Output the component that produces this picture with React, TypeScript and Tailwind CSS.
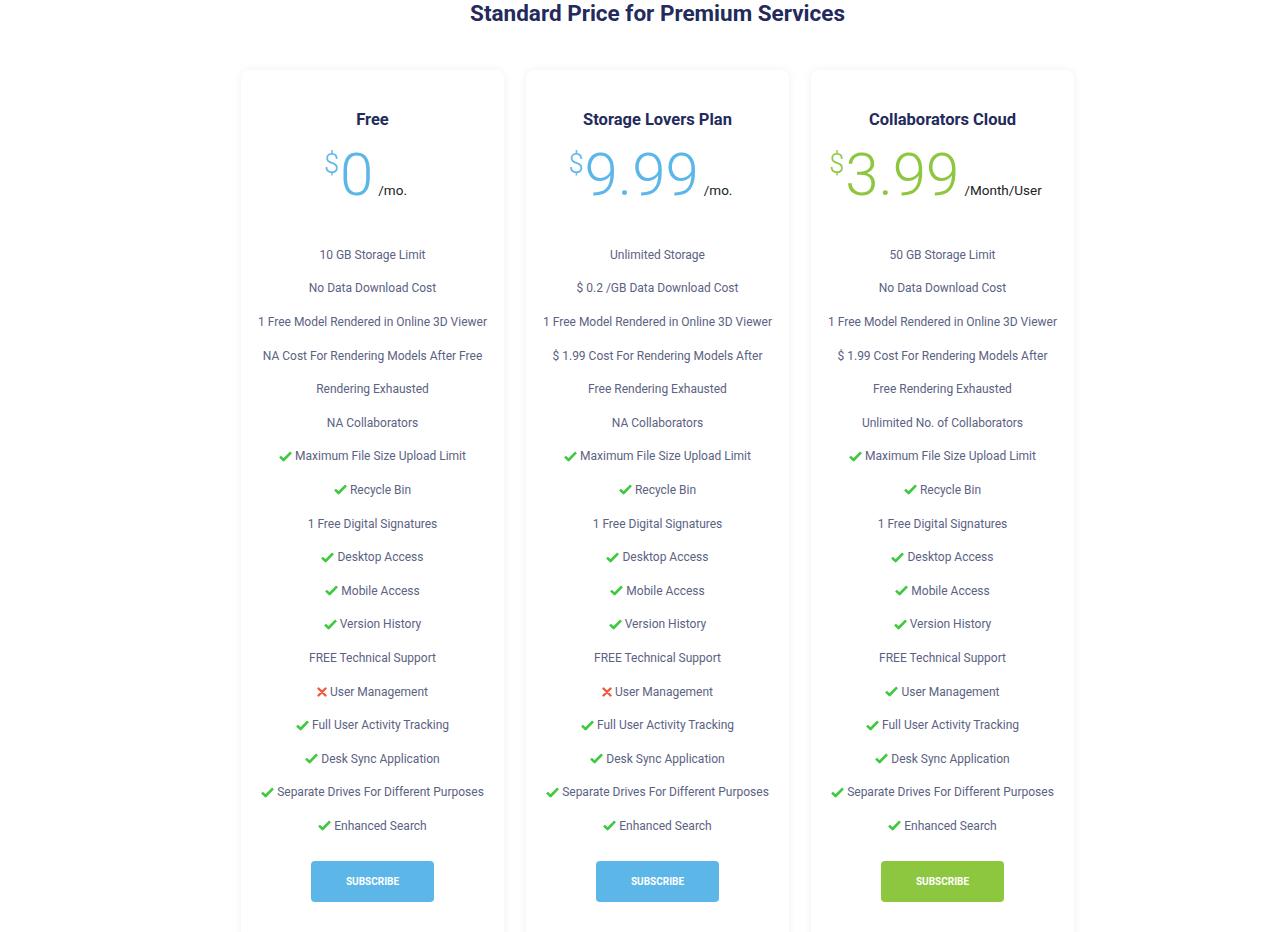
import React from 'react';

type Feature = { text: string; icon?: 'check' | 'cross' };

type Plan = {
  name: string;
  price: string;
  period: string;
  color: 'blue' | 'green';
  features: Feature[];
};

const PLANS: Plan[] = [
  {
    name: 'Free',
    price: '0',
    period: '/mo.',
    color: 'blue',
    features: [
      { text: '10 GB Storage Limit' },
      { text: 'No Data Download Cost' },
      { text: '1 Free Model Rendered in Online 3D Viewer' },
      { text: 'NA Cost For Rendering Models After Free' },
      { text: 'Rendering Exhausted' },
      { text: 'NA Collaborators' },
      { text: 'Maximum File Size Upload Limit', icon: 'check' },
      { text: 'Recycle Bin', icon: 'check' },
      { text: '1 Free Digital Signatures' },
      { text: 'Desktop Access', icon: 'check' },
      { text: 'Mobile Access', icon: 'check' },
      { text: 'Version History', icon: 'check' },
      { text: 'FREE Technical Support' },
      { text: 'User Management', icon: 'cross' },
      { text: 'Full User Activity Tracking', icon: 'check' },
      { text: 'Desk Sync Application', icon: 'check' },
      { text: 'Separate Drives For Different Purposes', icon: 'check' },
      { text: 'Enhanced Search', icon: 'check' },
    ],
  },
  {
    name: 'Storage Lovers Plan',
    price: '9.99',
    period: '/mo.',
    color: 'blue',
    features: [
      { text: 'Unlimited Storage' },
      { text: '$ 0.2 /GB Data Download Cost' },
      { text: '1 Free Model Rendered in Online 3D Viewer' },
      { text: '$ 1.99 Cost For Rendering Models After' },
      { text: 'Free Rendering Exhausted' },
      { text: 'NA Collaborators' },
      { text: 'Maximum File Size Upload Limit', icon: 'check' },
      { text: 'Recycle Bin', icon: 'check' },
      { text: '1 Free Digital Signatures' },
      { text: 'Desktop Access', icon: 'check' },
      { text: 'Mobile Access', icon: 'check' },
      { text: 'Version History', icon: 'check' },
      { text: 'FREE Technical Support' },
      { text: 'User Management', icon: 'cross' },
      { text: 'Full User Activity Tracking', icon: 'check' },
      { text: 'Desk Sync Application', icon: 'check' },
      { text: 'Separate Drives For Different Purposes', icon: 'check' },
      { text: 'Enhanced Search', icon: 'check' },
    ],
  },
  {
    name: 'Collaborators Cloud',
    price: '3.99',
    period: '/Month/User',
    color: 'green',
    features: [
      { text: '50 GB Storage Limit' },
      { text: 'No Data Download Cost' },
      { text: '1 Free Model Rendered in Online 3D Viewer' },
      { text: '$ 1.99 Cost For Rendering Models After' },
      { text: 'Free Rendering Exhausted' },
      { text: 'Unlimited No. of Collaborators' },
      { text: 'Maximum File Size Upload Limit', icon: 'check' },
      { text: 'Recycle Bin', icon: 'check' },
      { text: '1 Free Digital Signatures' },
      { text: 'Desktop Access', icon: 'check' },
      { text: 'Mobile Access', icon: 'check' },
      { text: 'Version History', icon: 'check' },
      { text: 'FREE Technical Support' },
      { text: 'User Management', icon: 'check' },
      { text: 'Full User Activity Tracking', icon: 'check' },
      { text: 'Desk Sync Application', icon: 'check' },
      { text: 'Separate Drives For Different Purposes', icon: 'check' },
      { text: 'Enhanced Search', icon: 'check' },
    ],
  },
];

const Check = () => (
  <svg width="13" height="11" viewBox="0 0 13 11" className="mr-[3px] shrink-0">
    <path d="M1 5.6 L4.6 9 L12 1.4" fill="none" stroke="#3ec93e" strokeWidth="2.6" strokeLinejoin="round" />
  </svg>
);

const Cross = () => (
  <svg width="10" height="10" viewBox="0 0 10 10" className="mr-[3px] shrink-0">
    <path d="M1.5 1.5 L8.5 8.5 M8.5 1.5 L1.5 8.5" stroke="#f05a3c" strokeWidth="2.4" strokeLinecap="round" />
  </svg>
);

const PlanCard: React.FC<{ plan: Plan }> = ({ plan }) => {
  const priceColor = plan.color === 'green' ? 'text-[#8dc63f]' : 'text-[#5db6e8]';
  const btnColor = plan.color === 'green' ? 'bg-[#8dc63f]' : 'bg-[#5db6e8]';
  return (
    <div className="w-[263px] bg-white rounded-lg shadow-[0_0_10px_rgba(0,0,0,0.06)] pt-[39px] pb-10 flex flex-col items-center">
      <h3 className="text-[16.5px] font-bold text-[#232a5c] leading-[22px]">{plan.name}</h3>
      <div className={`flex items-end mt-[9px] mr-[14px] ${priceColor}`}>
        <span className="text-[27px] font-light leading-none self-start mt-[11px]">$</span>
        <span className="text-[60px] font-light leading-[70px] ml-[1px]">{plan.price}</span>
        <span className="text-[13.5px] text-[#222] ml-[5px] mb-[10px]">{plan.period}</span>
      </div>
      <ul className="mt-[28px] flex flex-col items-center">
        {plan.features.map((f, i) => (
          <li key={i} className="h-[33.6px] flex items-center text-[12px] text-[#5b6282] whitespace-nowrap">
            {f.icon === 'check' && <Check />}
            {f.icon === 'cross' && <Cross />}
            {f.text}
          </li>
        ))}
      </ul>
      <button className={`mt-[18px] w-[123px] h-[41px] rounded-sm ${btnColor} text-white text-[10px] font-bold`}>
        SUBSCRIBE
      </button>
    </div>
  );
};

export default function App() {
  return (
    <div className="w-[1286px] h-[932px] overflow-hidden bg-white pl-[29px]" style={{ fontFamily: 'Roboto, "Liberation Sans", sans-serif' }}>
      <h1 className="text-center text-[22.5px] font-bold text-[#232a5c] leading-[26px]">
        Standard Price for Premium Services
      </h1>
      <div className="flex justify-center gap-[22px] mt-[44px]">
        {PLANS.map((p) => (
          <PlanCard key={p.name} plan={p} />
        ))}
      </div>
    </div>
  );
}
